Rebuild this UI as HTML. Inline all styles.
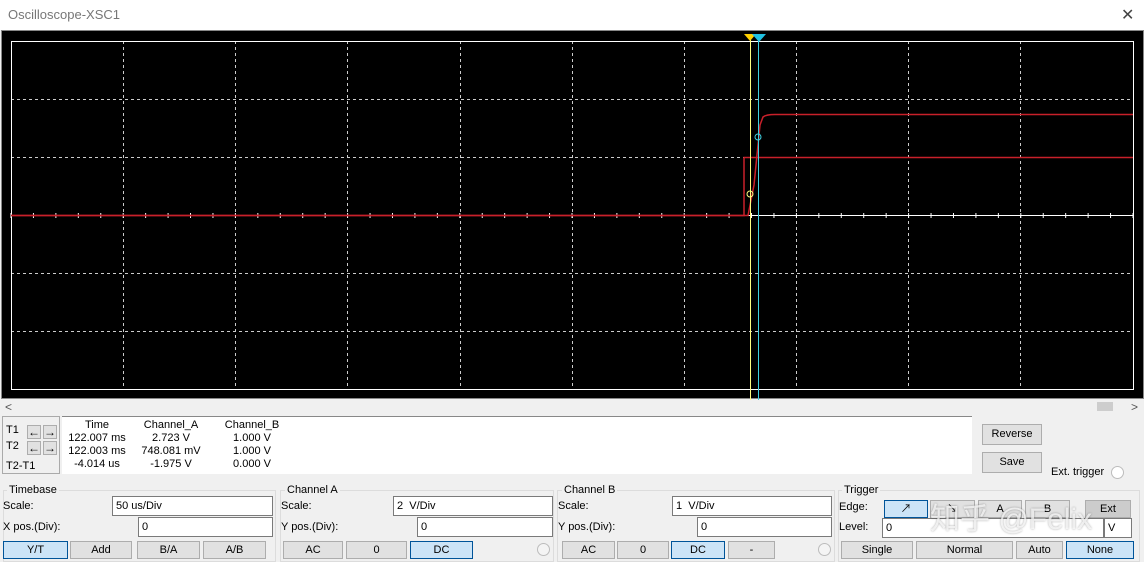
<!DOCTYPE html>
<html><head><meta charset="utf-8"><style>
*{box-sizing:border-box;margin:0;padding:0}
body{width:1144px;height:560px;background:#f0f0f0;font-family:"Liberation Sans","Noto Sans CJK SC",sans-serif;font-size:11px;color:#000;position:relative;overflow:hidden}
.a{position:absolute}
.title{left:0;top:0;width:1144px;height:30px;background:#fff}
.btn{position:absolute;background:#e1e1e1;border:1px solid #adadad;text-align:center;line-height:16px;height:18px}
.sel{background:#cce4f7;border-color:#005499}
.inp{position:absolute;background:#fff;border:1px solid #7a7a7a;height:20px;line-height:18px;padding-left:3px}
.grp{position:absolute;border:1px solid #dcdcdc}
.lbl{position:absolute;background:#f0f0f0;padding:0 2px}
.radio{position:absolute;width:13px;height:13px;border-radius:50%;border:1px solid #bcbcbc;background:#f4f4f4}
.ar{position:absolute;width:14px;height:14px;background:#e1e1e1;border:1px solid #adadad;font-size:12px;line-height:12px;text-align:center;font-weight:bold}
</style></head><body>
<div class="a title"></div>
<div class="a" style="left:8px;top:7px;font-size:13px;color:#777">Oscilloscope-XSC1</div>
<div class="a" style="left:1121px;top:5px;font-size:16px;color:#444">✕</div>
<div class="a" style="left:1px;top:30px;width:1143px;height:369px;background:#000;border:1px solid #888"></div>
<svg class="a" style="left:0;top:0" width="1144" height="400">
<g stroke="#ccc" stroke-width="1" stroke-dasharray="3,3">
<line x1="123.5" y1="41" x2="123.5" y2="389"/><line x1="235.5" y1="41" x2="235.5" y2="389"/><line x1="347.5" y1="41" x2="347.5" y2="389"/><line x1="460.5" y1="41" x2="460.5" y2="389"/><line x1="572.5" y1="41" x2="572.5" y2="389"/><line x1="684.5" y1="41" x2="684.5" y2="389"/><line x1="796.5" y1="41" x2="796.5" y2="389"/><line x1="908.5" y1="41" x2="908.5" y2="389"/><line x1="1020.5" y1="41" x2="1020.5" y2="389"/>
<line x1="11" y1="99.5" x2="1133" y2="99.5"/><line x1="11" y1="157.5" x2="1133" y2="157.5"/><line x1="11" y1="273.5" x2="1133" y2="273.5"/><line x1="11" y1="331.5" x2="1133" y2="331.5"/>
</g>
<rect x="11.5" y="41.5" width="1122" height="348" fill="none" stroke="#fff"/>
<line x1="11" y1="215.5" x2="1133" y2="215.5" stroke="#fff"/>
<g stroke="#fff" id="tk"></g>
<path d="M11 215.5H744V157.5H1133" fill="none" stroke="#c8202a" stroke-width="1.5"/>
<path d="M11 215.5H748L754 185L760 125L763 117Q766 114.5 775 114.5H1133" fill="none" stroke="#c8202a" stroke-width="1.5"/>
<line x1="750.5" y1="36" x2="750.5" y2="400" stroke="#ffff80"/>
<line x1="758.5" y1="36" x2="758.5" y2="400" stroke="#40d0e0"/>
<polygon points="744,34 756,34 750,41" fill="#ffd000"/>
<polygon points="752,34 766,34 759,42" fill="#20c0e0"/>
<circle cx="750" cy="194" r="3" fill="none" stroke="#ffff80"/>
<circle cx="758" cy="137" r="3" fill="none" stroke="#40d0e0"/>
</svg>
<script>
var g=document.getElementById('tk'),s='';for(var i=0;i<=50;i++){var x=11+i*22.44;s+='<line x1="'+x+'" y1="213" x2="'+x+'" y2="218"/>';}g.innerHTML=s;
</script>
<div class="a" style="left:5px;top:400px;font-size:12px;color:#555">&lt;</div>
<div class="a" style="left:1097px;top:402px;width:16px;height:9px;background:#cdcdcd"></div>
<div class="a" style="left:1131px;top:400px;font-size:12px;color:#555">&gt;</div>
<div class="a" style="left:2px;top:416px;width:58px;height:58px;border:1px solid #aaa"></div>
<div class="a" style="left:6px;top:424px">T1</div><div class="a" style="left:6px;top:440px">T2</div><div class="a" style="left:6px;top:460px">T2-T1</div>
<div class="ar" style="left:27px;top:425px">←</div>
<div class="ar" style="left:43px;top:425px">→</div>
<div class="ar" style="left:27px;top:441px">←</div>
<div class="ar" style="left:43px;top:441px">→</div>
<div class="a" style="left:62px;top:416px;width:910px;height:58px;background:#fff;border-top:1px solid #888"></div>
<div class="a" style="left:62px;top:419px;width:250px;line-height:13px">
<div class="a" style="left:0;width:70px;text-align:center">Time<br>122.007 ms<br>122.003 ms<br>-4.014 us</div>
<div class="a" style="left:74px;width:70px;text-align:center">Channel_A<br>2.723 V<br>748.081 mV<br>-1.975 V</div>
<div class="a" style="left:155px;width:70px;text-align:center">Channel_B<br>1.000 V<br>1.000 V<br>0.000 V</div>
</div>
<div class="btn" style="left:982px;top:424px;width:60px;height:21px;line-height:19px">Reverse</div>
<div class="btn" style="left:982px;top:452px;width:60px;height:21px;line-height:19px">Save</div>
<div class="a" style="left:1051px;top:466px">Ext. trigger</div><div class="radio" style="left:1111px;top:466px;background:#fff"></div>

<div class="grp" style="left:3px;top:490px;width:273px;height:72px"></div><div class="lbl" style="left:7px;top:484px">Timebase</div>
<div class="a" style="left:3px;top:500px">Scale:</div><div class="inp" style="left:112px;top:496px;width:161px">50 us/Div</div>
<div class="a" style="left:3px;top:521px">X pos.(Div):</div><div class="inp" style="left:138px;top:517px;width:135px">0</div>
<div class="btn sel" style="left:3px;top:541px;width:65px">Y/T</div><div class="btn" style="left:70px;top:541px;width:62px">Add</div><div class="btn" style="left:137px;top:541px;width:63px">B/A</div><div class="btn" style="left:203px;top:541px;width:63px">A/B</div>

<div class="grp" style="left:280px;top:490px;width:274px;height:72px"></div><div class="lbl" style="left:285px;top:484px">Channel A</div>
<div class="a" style="left:281px;top:500px">Scale:</div><div class="inp" style="left:393px;top:496px;width:160px">2&nbsp; V/Div</div>
<div class="a" style="left:281px;top:521px">Y pos.(Div):</div><div class="inp" style="left:417px;top:517px;width:136px">0</div>
<div class="btn" style="left:283px;top:541px;width:60px">AC</div><div class="btn" style="left:346px;top:541px;width:61px">0</div><div class="btn sel" style="left:410px;top:541px;width:63px">DC</div><div class="radio" style="left:537px;top:543px"></div>

<div class="grp" style="left:557px;top:490px;width:278px;height:72px"></div><div class="lbl" style="left:562px;top:484px">Channel B</div>
<div class="a" style="left:558px;top:500px">Scale:</div><div class="inp" style="left:672px;top:496px;width:160px">1&nbsp; V/Div</div>
<div class="a" style="left:558px;top:521px">Y pos.(Div):</div><div class="inp" style="left:697px;top:517px;width:135px">0</div>
<div class="btn" style="left:562px;top:541px;width:53px">AC</div><div class="btn" style="left:617px;top:541px;width:52px">0</div><div class="btn sel" style="left:671px;top:541px;width:54px">DC</div><div class="btn" style="left:728px;top:541px;width:47px">-</div><div class="radio" style="left:818px;top:543px"></div>

<div class="grp" style="left:838px;top:490px;width:302px;height:72px"></div><div class="lbl" style="left:842px;top:484px">Trigger</div>
<div class="a" style="left:839px;top:501px">Edge:</div>
<div class="btn sel" style="left:884px;top:500px;width:44px">↗</div><div class="btn" style="left:930px;top:500px;width:45px">↘</div><div class="btn" style="left:978px;top:500px;width:44px">A</div><div class="btn" style="left:1025px;top:500px;width:45px">B</div><div class="btn" style="left:1085px;top:500px;width:46px;background:#ccc">Ext</div>
<div class="a" style="left:839px;top:521px">Level:</div><div class="inp" style="left:882px;top:518px;width:222px">0</div><div class="inp" style="left:1104px;top:518px;width:28px">V</div>
<div class="btn" style="left:841px;top:541px;width:72px">Single</div><div class="btn" style="left:916px;top:541px;width:97px">Normal</div><div class="btn" style="left:1016px;top:541px;width:47px">Auto</div><div class="btn sel" style="left:1066px;top:541px;width:68px">None</div>
<div class="a" style="left:930px;top:494px;font-size:30px;color:rgba(255,255,255,0.75);text-shadow:0 0 2px rgba(0,0,0,0.35);white-space:nowrap">知乎 @Felix</div>
</body></html>
